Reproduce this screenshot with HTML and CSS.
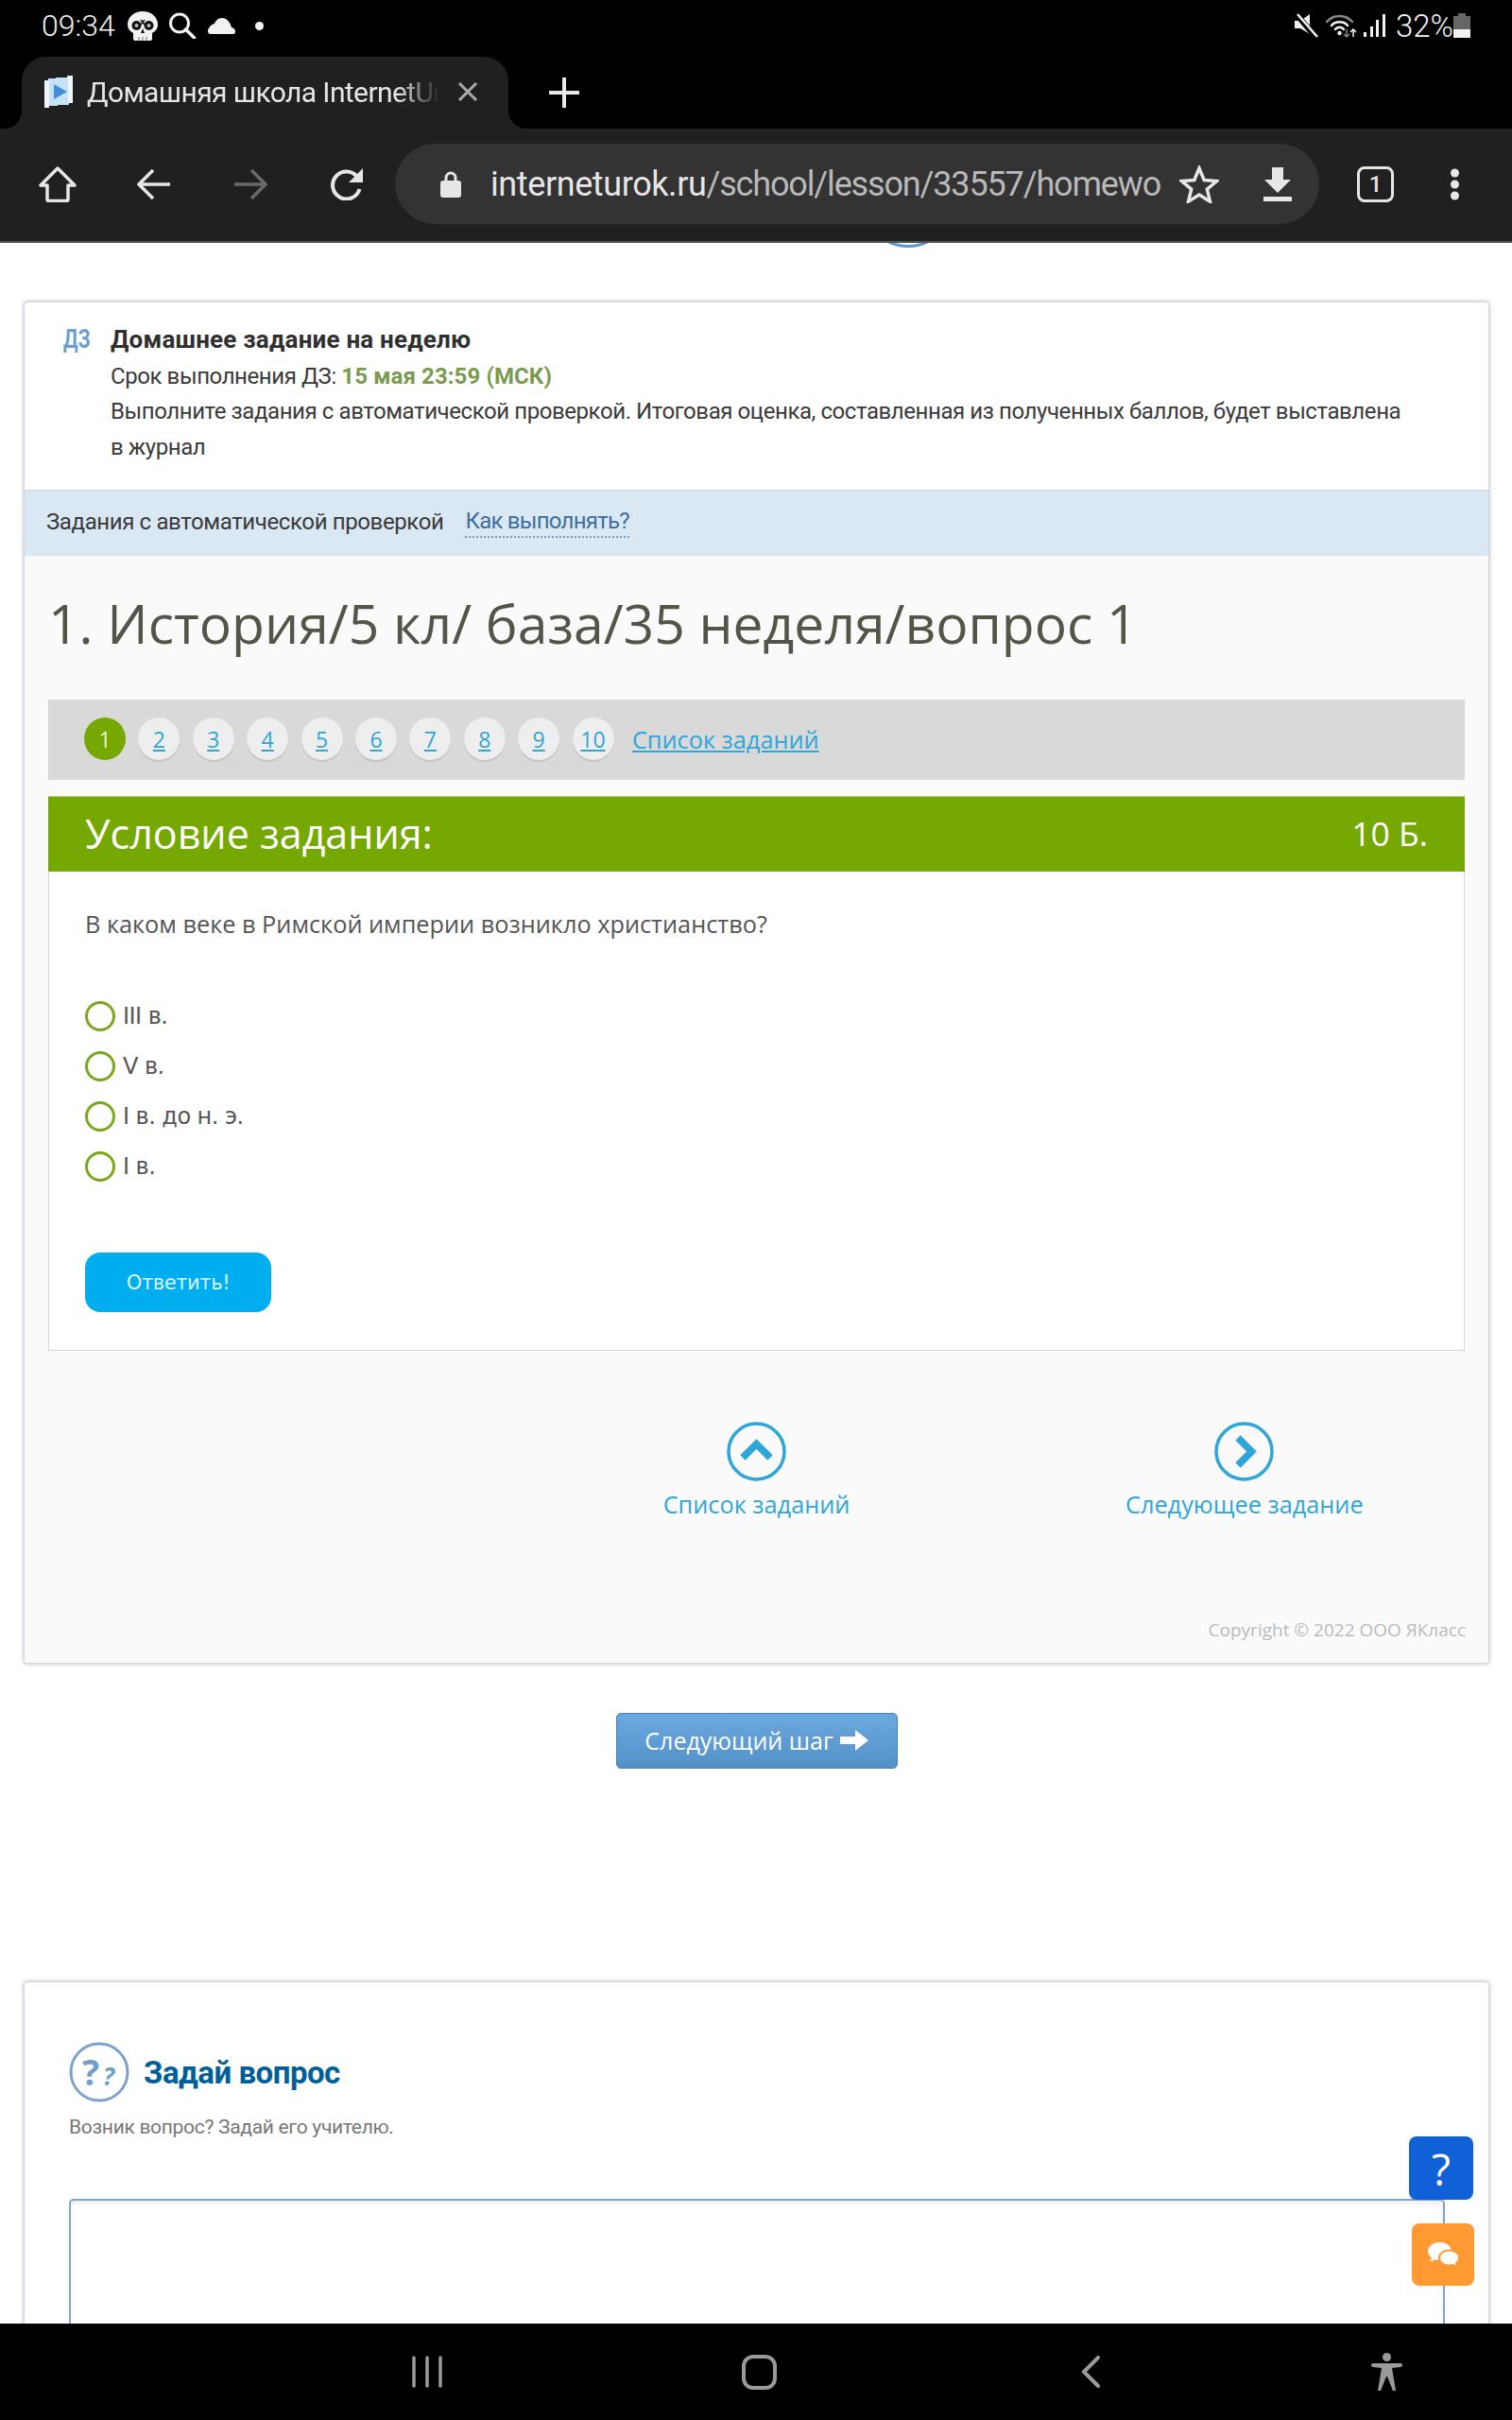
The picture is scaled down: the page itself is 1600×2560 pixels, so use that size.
FILE: index.html
```html
<!DOCTYPE html>
<html lang="ru">
<head>
<meta charset="utf-8">
<title>Домашняя школа InternetUrok</title>
<link rel="stylesheet" href="styles.css">
</head>
<body>
<header class="chrome">
  <div class="status">
    <div class="status-left">
      <span class="clock">09:34</span>
      <svg class="ic-skull" viewBox="0 0 32 31"><path fill="#f2f2f2" d="M16 0C7 0 0 6 0 14c0 4 2 7 6 9v6a2 2 0 0 0 2 2h16a2 2 0 0 0 2-2v-6c4-2 6-5 6-9C32 6 25 0 16 0z"/><circle cx="9.500" cy="15" r="5" fill="#111"/><circle cx="22.500" cy="15" r="5" fill="#111"/><circle cx="9.500" cy="15" r="2" fill="#bbb"/><circle cx="22.500" cy="15" r="2" fill="#bbb"/><path d="M14 9l4 5M18 9l-4 5" stroke="#111" stroke-width="1.500"/><path fill="#111" d="M16 18l2 5h-4z"/><path d="M12 27v4M16 27v4M20 27v4" stroke="#777" stroke-width="1"/></svg>
      <svg class="ic-search" viewBox="0 0 30 28"><circle cx="12" cy="11.500" r="9.500" fill="none" stroke="#f2f2f2" stroke-width="3"/><path d="M18.500 18l9 9" stroke="#f2f2f2" stroke-width="3.500" stroke-linecap="round"/></svg>
      <svg class="ic-cloud" viewBox="0 0 30 17"><path fill="#f2f2f2" d="M3 17h24c3 0 3-6-2-7-1-5-5-10-10-10-4 0-7 3-8 6C3 7 0 11 0 14c0 2 1 3 3 3z"/></svg>
      <span class="status-dot"></span>
    </div>
    <div class="status-right">
      <svg class="ic-mute" viewBox="0 0 25 26"><path fill="#f2f2f2" d="M0 8h6l10-7v21L6 16H0z"/><path d="M1 0l21 25" stroke="#000" stroke-width="6"/><path d="M3 1l21 24" stroke="#f2f2f2" stroke-width="2.500"/></svg>
      <svg class="ic-wifi" viewBox="0 0 33 26"><g fill="none" stroke-linecap="round"><path d="M1 9c7-8 20-8 27 0" stroke="#8a8a8a" stroke-width="2.500"/><path d="M6 13c4-5 13-5 17 0" stroke="#f2f2f2" stroke-width="2.500"/><path d="M10 17c2-3 7-3 9 0" stroke="#f2f2f2" stroke-width="2.500"/></g><circle cx="14.500" cy="21" r="2.200" fill="#f2f2f2"/><path d="M22 17v8M19 22l3 3 3-3" stroke="#8a8a8a" stroke-width="1.500" fill="none"/><path d="M29 25v-8M26 20l3-3 3 3" stroke="#f2f2f2" stroke-width="1.500" fill="none"/></svg>
      <svg class="ic-signal" viewBox="0 0 23 24"><path fill="#f2f2f2" d="M0 19h3v5H0zM7 13h3v11H7zM13 6h3v18h-3zM20 0h3v24h-3z"/></svg>
      <span class="battery-text">32%</span>
      <span class="battery"><span class="battery-cap"></span><span class="battery-body"><span class="battery-fill"></span></span></span>
    </div>
  </div>
  <div class="tabstrip">
    <div class="tab">
      <svg class="favicon" viewBox="0 0 30 34"><path fill="#c6e2f5" d="M0 5h4V3h8V2h12V0h6v29h-4v2H14v1H5v2H0z"/><path fill="#eef7fd" d="M0 5h5v29H0zM25 0h5v29h-5z"/><path fill="#3f8fd6" d="M10 9l14 8-14 8z"/></svg>
      <span class="tab-title">Домашняя школа InternetUr</span>
      <svg class="tab-close" viewBox="0 0 22 20"><path d="M2 1l18 18M20 1L2 19" stroke="#a8a8a8" stroke-width="3"/></svg>
    </div>
    <svg class="newtab" viewBox="0 0 32 32"><path d="M16 1v30M1 16h30" stroke="#e8e8e8" stroke-width="4" stroke-linecap="round"/></svg>
  </div>
  <div class="toolbar">
    <svg class="tb-home" viewBox="0 0 40 38"><path d="M20 2L2 20h7v15a1.500 1.500 0 0 0 1.500 1.500h19A1.500 1.500 0 0 0 31 35V20h7z" fill="none" stroke="#e6e6e6" stroke-width="3.500" stroke-linejoin="round"/></svg>
    <svg class="tb-back" viewBox="0 0 36 34"><path d="M35 17H3M17 2L2 17l15 15" fill="none" stroke="#e6e6e6" stroke-width="3.500"/></svg>
    <svg class="tb-forward" viewBox="0 0 36 34"><path d="M1 17h32M19 2l15 15-15 15" fill="none" stroke="#6a6a6a" stroke-width="3.500"/></svg>
    <svg class="tb-reload" viewBox="0 0 36 34"><path d="M29 9a14.500 14.500 0 1 0 2.500 13" fill="none" stroke="#e6e6e6" stroke-width="4"/><path fill="#e6e6e6" d="M35 0v15H20z"/></svg>
    <div class="omnibox">
      <svg class="lock" viewBox="0 0 22 28"><path d="M6 12V7a5 5 0 0 1 10 0v5" fill="none" stroke="#e6e6e6" stroke-width="3"/><rect y="10" width="22" height="18" rx="3" fill="#e6e6e6"/></svg>
      <span class="url"><span class="url-host">interneturok.ru</span>/school/lesson/33557/homewo</span>
      <svg class="star" viewBox="0 0 42 40"><path d="M21 3l5.200 12.500 13.300 1-10.200 8.700 3.200 13L21 31l-11.500 7.200 3.200-13L2.500 16.500l13.300-1z" fill="none" stroke="#e6e6e6" stroke-width="3.500" stroke-linejoin="miter"/></svg>
      <svg class="download" viewBox="0 0 30 36"><path fill="#e6e6e6" d="M9 0h12v13h8L15 27 1 13h8zM0 31h30v5H0z"/></svg>
    </div>
    <span class="tabcount">1</span>
    <svg class="tb-menu" viewBox="0 0 11 34"><circle cx="5.500" cy="5" r="4.500" fill="#e6e6e6"/><circle cx="5.500" cy="17" r="4.500" fill="#e6e6e6"/><circle cx="5.500" cy="29" r="4.500" fill="#e6e6e6"/></svg>
  </div>
</header>

<main class="viewport">
  <div class="arc-row"><span class="arc"></span></div>

  <section class="card">
    <div class="hw-head">
      <span class="hw-badge">ДЗ</span>
      <div class="hw-text">
        <strong class="hw-title">Домашнее задание на неделю</strong><br>
        Срок выполнения ДЗ: <b class="hw-date">15 мая 23:59 (МСК)</b><br>
        Выполните задания с автоматической проверкой. Итоговая оценка, составленная из полученных баллов, будет выставлена<br>
        в журнал
      </div>
    </div>
    <div class="strip">
      <span>Задания с автоматической проверкой</span>
      <a class="strip-link">Как выполнять?</a>
    </div>
    <div class="lesson">
      <div class="task">
        <h1 class="task-title">1. История/5 кл/ база/35 неделя/вопрос 1</h1>
        <nav class="pager">
          <a class="dot dot-on">1</a>
          <a class="dot">2</a>
          <a class="dot">3</a>
          <a class="dot">4</a>
          <a class="dot">5</a>
          <a class="dot">6</a>
          <a class="dot">7</a>
          <a class="dot">8</a>
          <a class="dot">9</a>
          <a class="dot">10</a>
          <a class="pager-list">Список заданий</a>
        </nav>
        <div class="q-head">
          <span class="q-head-title">Условие задания:</span>
          <span class="q-head-score">10 Б.</span>
        </div>
        <div class="q-body">
          <p class="q-text">В каком веке в Римской империи возникло христианство?</p>
          <ul class="options">
            <li class="option"><span class="radio"></span>III в.</li>
            <li class="option"><span class="radio"></span>V в.</li>
            <li class="option"><span class="radio"></span>I в. до н. э.</li>
            <li class="option"><span class="radio"></span>I в.</li>
          </ul>
          <button class="answer">Ответить!</button>
        </div>
      </div>
      <div class="links">
        <a class="link link-list">
          <svg class="link-ic" viewBox="0 0 63 63"><circle cx="31.500" cy="31.500" r="29.500" fill="none" stroke="#2ea6d8" stroke-width="3.500"/><path d="M17 38l14.500-14.500L46 38" fill="none" stroke="#2ea6d8" stroke-width="7.500"/></svg>
          Список заданий
        </a>
        <a class="link link-next">
          <svg class="link-ic" viewBox="0 0 63 63"><circle cx="31.500" cy="31.500" r="29.500" fill="none" stroke="#2ea6d8" stroke-width="3.500"/><path d="M25 17l14.500 14.500L25 46" fill="none" stroke="#2ea6d8" stroke-width="7.500"/></svg>
          Следующее задание
        </a>
      </div>
      <div class="copyright">Copyright © 2022 ООО ЯКласс</div>
    </div>
  </section>

  <div class="step-row">
    <button class="step">Следующий шаг
      <svg class="step-arrow" viewBox="0 0 30 22"><path fill="#fff" d="M0 7h16V0l14 11-14 11v-7H0z"/></svg>
    </button>
  </div>

  <section class="card ask">
    <div class="ask-head">
      <svg class="ask-ic" viewBox="0 0 64 64"><circle cx="32" cy="32" r="30" fill="none" stroke="#7ba3cc" stroke-width="3"/><text x="14" y="46" class="ask-q1">?</text><text x="36" y="46" class="ask-q2">?</text></svg>
      <h2 class="ask-title">Задай вопрос</h2>
    </div>
    <p class="ask-sub">Возник вопрос? Задай его учителю.</p>
    <div class="ask-box"></div>
  </section>

  <a class="fab fab-help">?</a>
  <a class="fab fab-chat">
    <svg class="chat-ic" viewBox="0 0 33 26"><path fill="#fff" d="M12.500 0C5.500 0 0 4.200 0 9.500c0 2.800 1.500 5.200 4 7-.4 1.600-1.300 2.800-2.800 3.800 2.800 0 4.800-.8 6.500-2 1.500.4 3.100.7 4.800.7 7 0 12.500-4.200 12.500-9.500S19.500 0 12.500 0z"/><path fill="#fff" stroke="#ff9a33" stroke-width="2" d="M22.500 8.500c5.800 0 10.500 3.300 10.500 8 0 2.300-1.100 4.300-3 5.700.3 1.500 1.200 2.800 3 3.800-3 0-5-.8-6.500-2-1.300.3-2.700.5-4 .5-5.800 0-10.500-3.400-10.500-8s4.700-8 10.500-8z"/></svg>
  </a>
</main>

<footer class="navbar">
  <svg class="nav-recents" viewBox="0 0 32 34"><path d="M2 2v30M16 2v30M30 2v30" stroke="#9a9a9a" stroke-width="3.500" stroke-linecap="round"/></svg>
  <span class="nav-home"></span>
  <svg class="nav-back" viewBox="0 0 20 34"><path d="M18 2L3 17l15 15" fill="none" stroke="#9a9a9a" stroke-width="4" stroke-linecap="round"/></svg>
  <svg class="nav-a11y" viewBox="0 0 33 41"><circle cx="16.500" cy="4.500" r="4.500" fill="#9a9a9a"/><path fill="#9a9a9a" d="M2 11h29a2 2 0 0 1 0 4l-9 1 4 24-3 0-6-15-1 0-6 15-3 0 4-24-9-1a2 2 0 0 1 0-4z"/></svg>
</footer>
</body>
</html>
```
FILE: styles.css
```css
* { box-sizing: border-box; }
html, body { margin: 0; padding: 0; }
body {
  width: 1600px;
  height: 2560px;
  overflow: hidden;
  display: flex;
  flex-direction: column;
  background: #fff;
  font-family: "Open Sans", sans-serif;
}
svg { display: block; flex: none; }
a { cursor: pointer; }

/* browser chrome */
.chrome { flex: none; background: #000; height: 257px; display: flex; flex-direction: column; }
.status { height: 60px; padding: 0 44px 6px; display: flex; justify-content: space-between; align-items: center; color: #f2f2f2; font-family: Roboto, sans-serif; }
.status-left, .status-right { display: flex; align-items: center; }
.clock { font-size: 32px; width: 91px; font-weight: 300; }
.ic-skull { width: 32px; height: 31px; margin-right: 11px; }
.ic-search { width: 30px; height: 28px; margin-right: 12px; }
.ic-cloud { width: 30px; height: 17px; margin-right: 20px; }
.status-dot { width: 9px; height: 9px; border-radius: 50%; background: #f2f2f2; }
.ic-mute { width: 25px; height: 26px; margin-right: 8px; }
.ic-wifi { width: 33px; height: 26px; margin-right: 7px; }
.ic-signal { width: 23px; height: 24px; margin-right: 11px; }
.battery-text { font-size: 33px; font-weight: 300; width: 61px; }
.battery { width: 18px; height: 26px; display: flex; flex-direction: column; align-items: center; }
.battery-cap { width: 8px; height: 3px; background: #666; }
.battery-body { width: 18px; flex: 1; background: #666; display: flex; align-items: flex-end; }
.battery-fill { width: 100%; height: 9px; background: #f2f2f2; }

.tabstrip { height: 76px; display: flex; align-items: center; padding-left: 23px; }
.tab { position: relative; width: 515px; height: 76px; background: #202020; border-radius: 26px 26px 0 0; display: flex; align-items: center; padding: 0 0 2px 24px; align-self: flex-end; }
.tab::before, .tab::after { content: ""; position: absolute; bottom: 0; width: 18px; height: 18px; }
.tab::before { left: -18px; background: radial-gradient(circle at 0 0, transparent 17.500px, #202020 18px); }
.tab::after { right: -18px; background: radial-gradient(circle at 100% 0, transparent 17.500px, #202020 18px); }
.favicon { width: 30px; height: 34px; margin-right: 15px; }
.tab-title { width: 373px; white-space: nowrap; font-family: Roboto, sans-serif; font-size: 30px; letter-spacing: -.6px; color: #e6e6e6; -webkit-mask-image: linear-gradient(90deg, #000 88%, transparent 100%); mask-image: linear-gradient(90deg, #000 88%, transparent 100%); }
.tab-close { width: 22px; height: 20px; margin-left: 19px; }
.newtab { width: 32px; height: 32px; margin-left: 43px; }

.toolbar { height: 121px; background: #202020; border-bottom: 2px solid #555; display: flex; align-items: center; padding: 0 0 2px 41px; }
.tb-home { width: 40px; height: 38px; margin-right: 64px; }
.tb-back, .tb-forward, .tb-reload { width: 36px; height: 34px; }
.tb-back, .tb-forward { margin-right: 66px; }
.tb-reload { margin-right: 33px; }
.omnibox { width: 978px; height: 85px; border-radius: 43px; background: #333; display: flex; align-items: center; padding-left: 48px; }
.lock { width: 22px; height: 28px; margin-right: 31px; }
.url { width: 708px; white-space: nowrap; font-family: Roboto, sans-serif; font-size: 36px; letter-spacing: -1.150px; color: #b9b9b9; }
.url-host { color: #e6e6e6; letter-spacing: -.4px; }
.star { width: 42px; height: 40px; margin-left: 21px; margin-right: 47px; }
.download { width: 30px; height: 36px; }
.tabcount { width: 39px; height: 38px; margin-left: 40px; border: 3.500px solid #e6e6e6; border-radius: 8px; color: #e6e6e6; font-family: Roboto, sans-serif; font-size: 24px; font-weight: 500; display: flex; align-items: center; justify-content: center; }
.tb-menu { width: 11px; height: 34px; margin-left: 59px; }

/* page */
.viewport { flex: 1; min-height: 0; position: relative; overflow: hidden; padding: 0 24px 0 25px; background: #fff; }
.arc-row { height: 62px; overflow: hidden; }
.arc { display: block; width: 96px; height: 96px; margin: -91px 0 0 888px; border: 3px solid #5e97cd; border-radius: 50%; }
.card { background: #fff; border: 1px solid #d4d8de; border-radius: 4px; box-shadow: 0 0 4px rgba(90,100,120,.45); }

.hw-head { height: 198px; padding: 21px 0 0 41px; display: flex; }
.hw-badge { flex: none; width: 50px; font-family: Roboto, sans-serif; font-weight: 700; font-size: 27px; line-height: 37.500px; color: #6d9fd0; transform: scaleX(.78); transform-origin: left center; }
.hw-text { font-family: Roboto, sans-serif; font-size: 24px; letter-spacing: -.42px; line-height: 37.500px; color: #3a3a3a; white-space: nowrap; }
.hw-title { font-size: 26px; letter-spacing: .2px; color: #2f2f2f; }
.hw-date { color: #7a9a50; letter-spacing: .1px; }
.strip { height: 70px; background: #dae8f4; border-top: 1px solid #c9d5de; padding: 0 0 3px 23px; display: flex; align-items: center; gap: 23px; font-family: Roboto, sans-serif; font-size: 24px; letter-spacing: -.38px; color: #3a3a3a; }
.strip-link { color: #3d6f9e; border-bottom: 2px dotted #6f9cc6; line-height: 32px; letter-spacing: -.75px; }

.lesson { background: #fafafa; border-radius: 0 0 4px 4px; height: 1171px; display: flex; flex-direction: column; }
.task { padding: 0 25px; }
.task-title { margin: 0; height: 152px; padding-top: 31px; font-family: "Open Sans", sans-serif; font-weight: 400; font-size: 57px; line-height: 80px; color: #545448; }
.pager { height: 85px; background: #d9d9d9; display: flex; align-items: center; padding: 0 0 2px 38px; gap: 13.400px; font-size: 23px; }
.dot { width: 44px; height: 45px; border-radius: 50%; background: #eee; box-shadow: 0 2px 1px #c4c4c4; display: flex; align-items: center; justify-content: center; color: #2ea6d8; text-decoration: underline; }
.dot-on { background: #75a800; color: #e8f5cc; text-decoration: none; box-shadow: none; }
.pager-list { margin-left: 6px; font-size: 25.300px; color: #2ea6d8; text-decoration: underline; }
.q-head { margin-top: 17px; height: 80px; background: #75a800; display: flex; justify-content: space-between; align-items: center; padding: 0 39px 3px; color: #fff; border-top: 1px solid #b9cf80; }
.q-head-title { font-size: 43px; }
.q-head-score { font-size: 35.500px; }
.q-body { height: 507px; background: #fff; border: 1px solid #d8d8d8; border-top: 0; padding: 0 38px; }
.q-text { margin: 0; height: 137px; padding-top: 37px; font-size: 25.300px; line-height: 36px; color: #555; }
.options { list-style: none; margin: 0; padding: 0; }
.option { height: 53px; display: flex; align-items: flex-start; gap: 8px; font-family: "DejaVu Sans", sans-serif; font-size: 24px; letter-spacing: -.55px; line-height: 33px; color: #555; }
.radio { width: 32px; height: 32px; border: 3.500px solid #79a81f; border-radius: 50%; background: #fff; }
.answer { display: block; margin-top: 54px; width: 197px; height: 63px; border: 0; border-radius: 16px; background: #00aeef; color: #d8f7ff; font-family: "DejaVu Sans", sans-serif; font-size: 21px; letter-spacing: -.4px; }

.links { margin-top: 75px; display: grid; grid-template-columns: repeat(3, 1fr); font-size: 25.300px; color: #2ea6d8; }
.link { display: flex; flex-direction: column; align-items: center; gap: 5px; line-height: 38px; }
.link-list { grid-column: 2; }
.link-ic { width: 63px; height: 63px; }
.copyright { margin-top: auto; padding: 0 24px 21px 0; text-align: right; font-size: 19px; color: #bbb; line-height: 28px; }

.step-row { margin-top: 52px; height: 59px; display: flex; justify-content: center; }
.step { width: 298px; height: 59px; border: 1px solid #4a82b8; border-radius: 5px; background: linear-gradient(#6aa9de, #5390c9); color: #fff; font-family: "Open Sans", sans-serif; font-size: 25px; display: flex; align-items: center; justify-content: center; gap: 7px; padding: 0 0 2px; }
.step-arrow { width: 30px; height: 22px; }

.ask { margin-top: 225px; height: 600px; padding: 0 47px; }
.ask-head { padding-top: 63px; display: flex; align-items: center; gap: 15px; }
.ask-ic { width: 64px; height: 64px; }
.ask-q1 { font-family: "Open Sans", sans-serif; font-weight: 700; font-size: 38px; fill: #6f9fcb; }
.ask-q2 { font-family: "Open Sans", sans-serif; font-style: italic; font-weight: 700; font-size: 26px; fill: #6f9fcb; }
.ask-title { margin: 0; font-family: Roboto, sans-serif; font-weight: 700; font-size: 33px; letter-spacing: -.5px; color: #005f99; }
.ask-sub { margin: 9px 0 0; font-family: Roboto, sans-serif; font-size: 21px; letter-spacing: -.3px; line-height: 34px; color: #777; }
.ask-box { margin-top: 59px; width: 1456px; height: 300px; border: 2px solid #7fa6cc; border-radius: 5px; box-shadow: inset 0 3px 4px rgba(0,0,0,.08); }

.fab { position: absolute; display: flex; align-items: center; justify-content: center; border-radius: 8px; color: #fff; }
.fab-help { left: 1491px; top: 2003px; width: 68px; height: 67px; background: #1060d8; font-family: "Open Sans", sans-serif; font-size: 46px; }
.fab-chat { left: 1494px; top: 2095px; width: 66px; height: 66px; background: #ff9a33; }
.chat-ic { width: 33px; height: 26px; }

/* navigation bar */
.navbar { flex: none; height: 102px; background: #000; display: flex; align-items: center; padding-left: 436px; }
.nav-recents { width: 32px; height: 34px; margin-right: 317px; }
.nav-home { width: 37px; height: 37px; border: 4px solid #9a9a9a; border-radius: 12px; margin-right: 322px; }
.nav-back { width: 20px; height: 34px; margin-right: 287px; }
.nav-a11y { width: 33px; height: 41px; }
```
